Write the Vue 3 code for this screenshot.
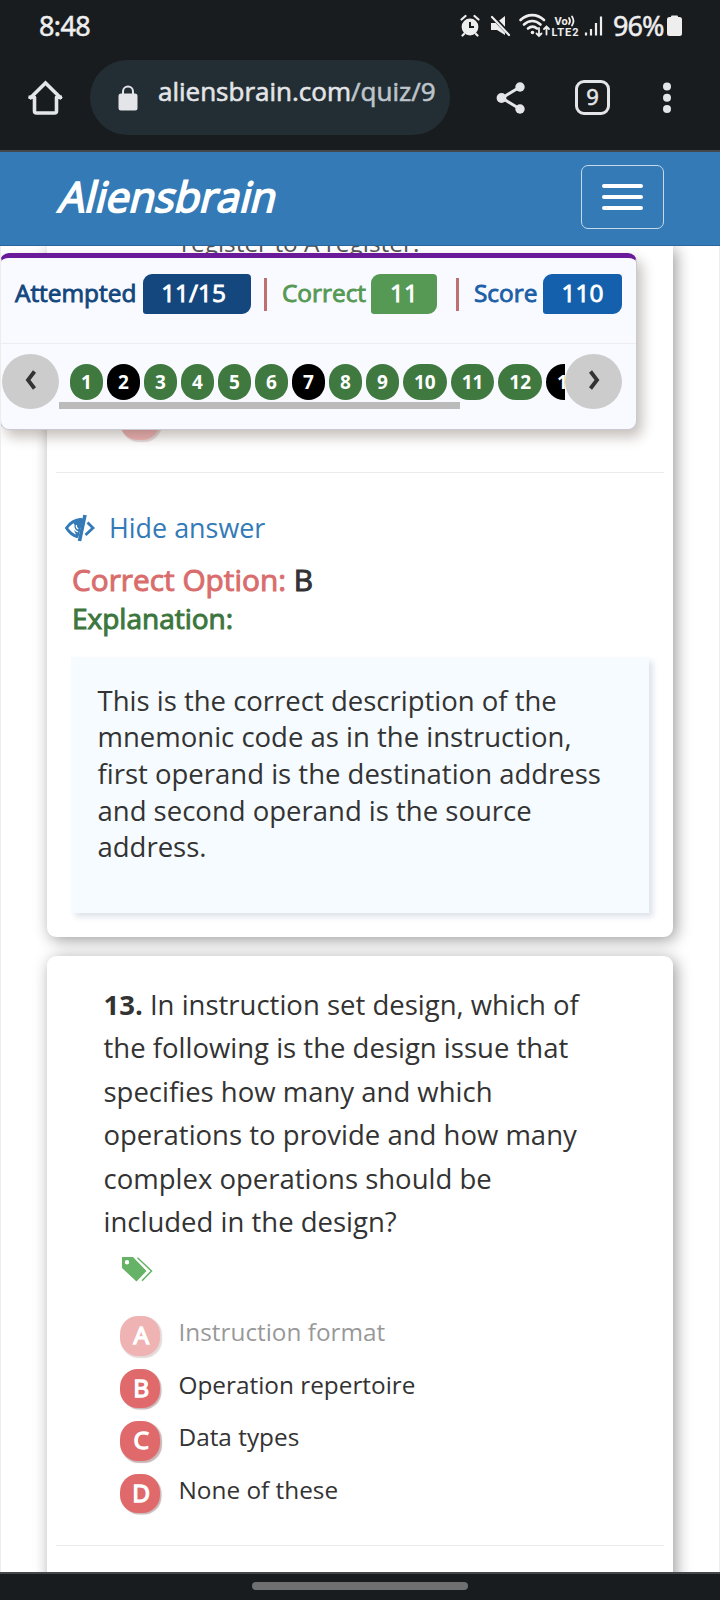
<script setup>
const pills = [
  { n: 1 }, { n: 2, wrong: true }, { n: 3 }, { n: 4 }, { n: 5 }, { n: 6 },
  { n: 7, wrong: true }, { n: 8 }, { n: 9 }, { n: 10, wide: true },
  { n: 11, wide: true }, { n: 12, wide: true }, { n: 13, wide: true, wrong: true },
]
const explanation = [
  'This is the correct description of the',
  'mnemonic code as in the instruction,',
  'first operand is the destination address',
  'and second operand is the source',
  'address.',
]
const question = [
  'the following is the design issue that',
  'specifies how many and which',
  'operations to provide and how many',
  'complex operations should be',
  'included in the design?',
]
const options = [
  { key: 'A', text: 'Instruction format', faded: true },
  { key: 'B', text: 'Operation repertoire' },
  { key: 'C', text: 'Data types' },
  { key: 'D', text: 'None of these' },
]
</script>

<template>
  <div class="screen">
    <header class="chrome">
      <div class="status">
        <span class="clock">8:48</span>
        <svg class="status-icons" width="146" height="28" viewBox="0 0 146 28" fill="none" stroke="#eee" stroke-linecap="round">
          <circle cx="10" cy="15" r="8.4" fill="#eee" stroke="none" />
          <path d="M1.5 7.5 5.5 4M18.5 7.5 14.500 4M4 22 2.500 23.500M16 22l1.500 1.500" stroke-width="2.200" />
          <path d="M10 10v5h4" stroke="#191c1f" stroke-width="2" stroke-linecap="butt" />
          <path d="M31 11h5l9-7v19l-8-5h-6z" fill="#eee" stroke="none" />
          <path d="M31 3 51 24" stroke="#191c1f" stroke-width="4" />
          <path d="M32 5 49 23" stroke-width="2.200" />
          <path d="M60.500 8c7-6.500 16.500-6.500 23.500 0M64 12.500c5-4.700 11.500-4.700 16.500 0M68 16.500c3-2.500 6-2.500 9 0" stroke-width="2.600" />
          <circle cx="72.500" cy="20.500" r="1.800" fill="#eee" stroke="none" />
          <path d="M79 16v7.500M76.500 21.500l2.500 2.500 2.500-2.500M86.500 22.500V15M84 17l2.500-2.500L89 17" stroke-width="1.800" />
          <path d="M109 6c1.200 1.800 1.200 4.200 0 6M112 4.500c2 3 2 6 0 9" stroke-width="1.800" />
          <path d="M126 20.500v3M131 17v6.500M136 11v12.500M141 4.500v19" stroke-width="2.200" stroke-linecap="butt" />
          <text x="94.500" y="12.500" class="tiny">Vo</text>
          <text x="91.500" y="24" class="tiny" textLength="27">LTE2</text>
        </svg>
        <span class="percent">96%</span>
        <svg class="battery" width="15" height="22" viewBox="0 0 15 22"><path d="M4 2V1.500Q4 .5 5 .5h5q1 0 1 1V2h1.500Q15 2 15 4.500v14q0 2.500-2.500 2.500h-10Q0 21 0 18.500v-14Q0 2 2.500 2H4z" fill="#eee" /></svg>
      </div>
      <div class="toolbar">
        <svg class="home" width="36" height="36" viewBox="0 0 36 36" fill="none" stroke="#e3e5e8" stroke-width="3.600" stroke-linejoin="miter" stroke-linecap="butt"><path d="M2.500 18.800 18.500 3l16 15.800" /><path d="M1.500 17.200H7.500V31q0 2 2 2h18q2 0 2-2V17.200H35" stroke-linejoin="round" /></svg>
        <div class="omnibox">
          <svg width="20" height="26" viewBox="0 0 20 26"><rect x=".5" y="8.500" width="19" height="17" rx="2.500" fill="#e3e5e8" /><path d="M5 9V6.500a5 5 0 0 1 10 0V9" fill="none" stroke="#e3e5e8" stroke-width="2" /></svg>
          <span class="url">aliensbrain.com<i>/quiz/9</i></span>
        </div>
        <svg class="share" width="30" height="34" viewBox="0 0 30 34" fill="#e3e5e8"><path d="M24 6 6 17l18 11" fill="none" stroke="#e3e5e8" stroke-width="3" /><circle cx="24" cy="6" r="4.700" /><circle cx="5.500" cy="17" r="4.900" /><circle cx="24" cy="28" r="4.700" /></svg>
        <span class="tabs">9</span>
        <svg class="dots" width="10" height="34" viewBox="0 0 10 34" fill="#e3e5e8"><circle cx="5" cy="5.500" r="4" /><circle cx="5" cy="16.700" r="4" /><circle cx="5" cy="28" r="4" /></svg>
      </div>
    </header>

    <nav class="navbar">
      <span class="brand">Aliensbrain</span>
      <button class="burger"><span></span><span></span><span></span></button>
    </nav>

    <main class="page">
      <section class="card answered">
        <p class="clipped">register to A register.</p>
        <span class="bubble faded last">D</span>
        <hr />
        <div class="hide-row">
          <svg width="30" height="28" viewBox="0 0 30 28" fill="none" stroke="#337ab7"><path d="M1.500 14Q7 6 16 5.500L12 22.500Q6 21 1.500 14z" stroke-width="3" stroke-linejoin="round" /><path d="M9 7Q14 3 18 5L13 22Q8 20 9 7z" fill="#337ab7" stroke="none" /><path d="M9 10.500Q8 16 13 18M11.500 11q-.8 3 1.800 4" stroke="#fff" stroke-width="1.200" /><path d="M20 1 14.500 27" stroke-width="3.600" /><path d="M22.500 8.500 28 14l-7.500 7" stroke-width="2.800" /></svg>
          <span>Hide answer</span>
        </div>
        <p class="correct"><span>Correct Option:</span> B</p>
        <p class="explain">Explanation:</p>
        <div class="explain-box"><div v-for="l in explanation" :key="l">{{ l }}</div></div>
      </section>

      <section class="card next">
        <div class="question">
          <div><b>13.</b> In instruction set design, which of</div>
          <div v-for="l in question" :key="l">{{ l }}</div>
        </div>
        <svg class="tags" width="31" height="25" viewBox="0 0 31 25"><path fill-rule="evenodd" d="M0 0h11l13.500 14L14.500 24.500 0 11zM5 3a2.200 2.200 0 1 0 0 4.400A2.200 2.200 0 0 0 5 3z" fill="#66b266" /><path d="M15.500.8 29.500 14 20 23.800" fill="none" stroke="#66b266" stroke-width="1.500" /></svg>
        <ul class="options">
          <li v-for="o in options" :key="o.key" :class="{ faded: o.faded }">
            <span class="bubble">{{ o.key }}</span><span class="label">{{ o.text }}</span>
          </li>
        </ul>
        <hr />
      </section>

      <aside class="panel">
        <div class="scores">
          <span class="name navy">Attempted</span><span class="badge b1">11/15</span>
          <i class="bar"></i>
          <span class="name green">Correct</span><span class="badge b2">11</span>
          <i class="bar second"></i>
          <span class="name blue">Score</span><span class="badge b3">110</span>
        </div>
        <div class="pager">
          <button class="arrow"><svg width="12" height="20" viewBox="0 0 12 20"><path d="M9.500 1.500 3 10l6.500 8.500" /></svg></button>
          <div class="scroller">
            <div class="pills"><span v-for="p in pills" :key="p.n" :class="{ wrong: p.wrong, wide: p.wide }">{{ p.n }}</span></div>
            <div class="thumb"></div>
          </div>
          <button class="arrow"><svg width="12" height="20" viewBox="0 0 12 20"><path d="M2.500 1.500 9 10l-6.500 8.500" /></svg></button>
        </div>
      </aside>
    </main>

    <footer class="gesture"><span></span></footer>
  </div>
</template>

<style>
body { margin: 0; background: #fff; }
</style>

<style scoped>
* { box-sizing: border-box; }
.screen { width: 720px; height: 1600px; overflow: hidden; font-family: "Open Sans", "Noto Sans", sans-serif; color: #333; }
p, ul, hr { margin: 0; padding: 0; }
button { border: 0; padding: 0; background: none; }

.chrome { height: 152px; background: #191c1f; border-bottom: 2px solid #44484b; color: #eee; font-family: "Noto Sans", sans-serif; }
.status { height: 60px; display: flex; align-items: flex-start; padding: 12px 0 0 39px; white-space: nowrap; }
.clock { width: 421px; font-size: 27px; line-height: 27px; letter-spacing: -.6px; -webkit-text-stroke: .5px #eee; }
.status-icons { flex: none; }
.tiny { font: bold 11px Roboto, sans-serif; fill: #eee; stroke: none; }
.percent { width: 54px; margin-left: 7px; font-size: 27px; line-height: 27px; letter-spacing: -1px; -webkit-text-stroke: .5px #eee; }
.battery { margin-top: 3px; }
.toolbar { height: 75px; display: flex; align-items: center; padding-left: 27px; }
.omnibox { width: 360px; height: 75px; margin-left: 27px; border-radius: 38px; background: #232e34; display: flex; align-items: center; padding-left: 28px; }
.url { margin: -14px 0 0 20px; font-family: "Open Sans", sans-serif; font-size: 26px; color: #e3e5e8; white-space: nowrap; line-height: 36px; -webkit-text-stroke: .6px currentColor; }
.url i { font-style: normal; color: #bdc5cb; }
.share { margin-left: 46px; }
.tabs { width: 35px; height: 35px; margin-left: 49px; border: 3.500px solid #e3e5e8; border-radius: 9px; font-size: 22px; line-height: 27px; text-align: center; color: #e3e5e8; -webkit-text-stroke: .5px #e3e5e8; }
.dots { margin-left: 52px; }

.navbar { height: 94px; background: #337ab7; border-bottom: 1px solid #2b659a; display: flex; justify-content: space-between; padding: 13px 56px 0 57px; }
.brand { font-size: 41.500px; line-height: 62px; height: 62px; color: #fff; -webkit-text-stroke: 1.800px #fff; transform: skewX(-14deg); transform-origin: 0 47px; }
.burger { width: 83px; height: 64px; border: 1px solid #c5d9ea; border-radius: 7px; display: flex; flex-direction: column; align-items: center; justify-content: center; gap: 7px; }
.burger span { width: 41px; height: 4px; border-radius: 2px; background: #fff; }

.page { position: relative; height: 1326px; overflow: hidden; border-left: 1px solid #ededed; border-right: 1px solid #ededed; padding: 0 46px; }
.card { background: #fff; box-shadow: 3px 3px 16px rgba(0, 0, 0, .4); }
.card hr { margin: 0 9px; border: 0; border-top: 1px solid #ececec; }
.answered { height: 691px; border-radius: 0 0 9px 9px; display: flow-root; }
.clipped { margin: -19px 0 0 134px; font-size: 24.400px; line-height: 32px; color: #555; }
.last { margin: 141px 0 0 73px; }
.answered hr { margin-top: 32px; }
.hide-row { display: flex; align-items: center; margin: 35px 0 0 18px; height: 40px; gap: 14px; font-size: 26.900px; color: #337ab7; }
.correct, .explain { margin-left: 25px; font-size: 29.800px; line-height: 38px; -webkit-text-stroke: 1px currentColor; white-space: nowrap; }
.correct { margin-top: 13px; }
.correct span { color: #d96d6d; }
.explain { color: #3c763d; font-size: 28px; line-height: 39px; }
.explain-box { margin: 19px 24px 0 24px; height: 256px; padding: 26px 0 0 26.500px; background: #f6fbff; box-shadow: 4px 4px 6px #dfe3eb; font-size: 27.500px; line-height: 36.700px; white-space: nowrap; }
.next { height: 700px; margin-top: 19px; border-radius: 9px; display: flow-root; }
.question { margin: 27px 0 0 56.500px; height: 260px; font-size: 27.500px; line-height: 43.400px; white-space: nowrap; }
.tags { display: block; margin: 14px 0 0 75px; }
.options { list-style: none; margin: 34px 0 0 73px; }
.options li { display: flex; height: 52.500px; }
.label { margin-left: 19px; font-size: 24.350px; line-height: 32px; }
.bubble { display: block; width: 39.500px; height: 39.500px; border-radius: 18px; background: #e0696b; color: #fff; font-size: 24.500px; line-height: 38px; text-align: center; font-weight: 400; -webkit-text-stroke: 1.400px #fff; padding-left: 3px; box-shadow: 1.500px 1.500px 1px rgba(120, 70, 70, .4); }
.faded { opacity: .5; }
.next hr { margin-top: 19px; }

.panel { position: absolute; top: 7px; left: -1px; width: 637px; height: 177px; border: 1px solid #c9c8d3; border-top: 5px solid #6a1b9a; border-radius: 9px; background: #f9faff; box-shadow: 5px 7px 13px rgba(80, 60, 50, .33); }
.scores { height: 86px; border-bottom: 1px solid #ececf1; padding: 16px 0 0 14px; display: flex; align-items: flex-start; }
.name { font-size: 24.400px; line-height: 38px; -webkit-text-stroke: .9px currentColor; white-space: nowrap; flex: none; }
.name.navy { width: 128px; color: #13477d; }
.name.green { width: 89px; color: #559955; }
.name.blue { width: 69px; color: #1b5fa6; }
.badge { flex: none; height: 40px; border-radius: 9px 4px 9px 3px; color: #fff; font-size: 24.400px; line-height: 38px; text-align: center; -webkit-text-stroke: .9px #fff; }
.b1 { width: 108px; background: #13477d; padding-right: 7px; }
.b2 { width: 66px; background: #559955; }
.b3 { width: 79px; background: #1560ad; }
.bar { flex: none; width: 3px; height: 33px; margin: 4px 15px 0 13px; background: #bd7070; }
.bar.second { margin-left: 19px; }
.pager { display: flex; padding: 10px 0 0 1px; }
.arrow { flex: none; width: 57px; height: 55px; border-radius: 50%; background: #ccc; display: grid; place-items: center; padding-bottom: 4px; }
.arrow path { fill: none; stroke: #333; stroke-width: 3.800px; }
.scroller { width: 506px; padding-top: 10px; overflow: hidden; }
.pills { display: flex; gap: 4px; padding-left: 11px; }
.pills span { flex: none; width: 33px; height: 36px; border-radius: 18px; background: #3f793f; color: #fff; font-size: 19px; line-height: 36px; text-align: center; font-weight: 700; }
.pills .wide { width: 43.700px; }
.pills .wrong { background: #000; }
.thumb { width: 401px; height: 7px; margin-top: 2px; background: #bbb; }

.gesture { height: 28px; background: #191c1f; border-top: 2px solid #44484b; display: flex; justify-content: center; padding-top: 8px; }
.gesture span { width: 216px; height: 8px; border-radius: 4px; background: #6e7072; }
</style>
